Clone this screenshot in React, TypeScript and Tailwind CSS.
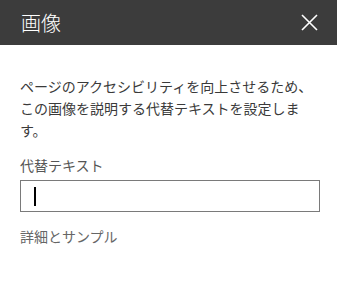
export default function App() {
  return (
    <div
      className="w-[337px] h-[284px] bg-white"
      style={{ fontFamily: '"Noto Sans CJK JP", "Noto Sans", sans-serif' }}
    >
      <div className="h-[45px] bg-[#3c3c3c] flex items-center justify-between pl-[21px] pr-[19px]">
        <span className="text-[20px] font-light text-white leading-none">画像</span>
        <svg width="17" height="17" viewBox="0 0 17 17" className="text-white">
          <path d="M1 1L16 16M16 1L1 16" stroke="currentColor" strokeWidth="1.6" />
        </svg>
      </div>
      <div className="pl-[20px] pr-[17px] pt-[30px]">
        <p className="text-[14px] leading-[22px] text-[#3a3a3a] pr-[3px]">
          ページのアクセシビリティを向上させるため、この画像を説明する代替テキストを設定します。
        </p>
        <label className="block mt-[14px] text-[14px] leading-[20px] text-[#555]">代替テキスト</label>
        <div className="mt-[5px] h-[32px] border border-[#7a7a7a] flex items-center pl-[13px]">
          <span className="w-[1.5px] h-[19px] bg-black" />
        </div>
        <div className="mt-[14px] text-[14px] leading-[20px] text-[#666]">詳細とサンプル</div>
      </div>
    </div>
  );
}
